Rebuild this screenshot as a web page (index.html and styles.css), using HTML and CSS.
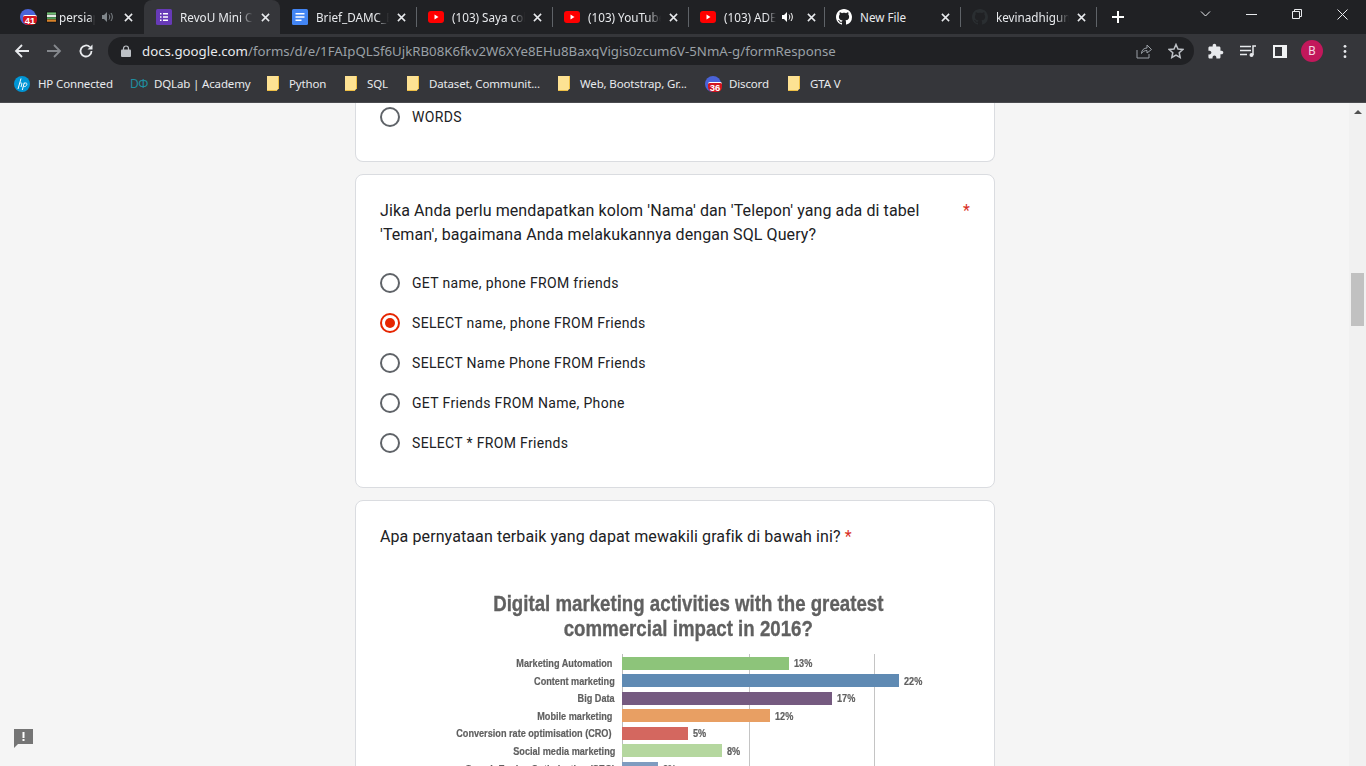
FILE: index.html
```html
<!DOCTYPE html>
<html lang="en">
<head>
    <meta charset="UTF-8">
    <meta name="viewport" content="width=device-width, initial-scale=1.0">
    <title>RevoU Mini Course</title>
    <link rel="stylesheet" href="styles.css">
</head>
<body>
    <div class="browser">
        <!-- tabs -->
        <div class="tabstrip">
            <div class="tab tab-first">
                <span class="badge-icon"><span class="badge-num">41</span></span>
                <svg class="fav-small" viewBox="0 0 12 12"><rect width="12" height="12" fill="#111"/><rect x="1" y="1" width="10" height="2.4" fill="#6fbf73"/><rect x="1" y="3.6" width="10" height="2.4" fill="#e8e8e8"/><rect x="1" y="6.2" width="10" height="2.4" fill="#4f9d5b"/><rect x="1" y="8.8" width="10" height="2.4" fill="#d9822b"/></svg>
                <span class="tab-title short">persiap</span>
                <svg class="speaker dim" viewBox="0 0 12 12"><path d="M1 4h2l3-3v10L3 8H1z" fill="currentColor"/><path d="M8 3.5c1 1.400 1 3.600 0 5M10 2c1.800 2.400 1.800 5.600 0 8" stroke="currentColor" fill="none"/></svg>
                <svg class="close" viewBox="0 0 10 10"><path d="M1 1l8 8M9 1L1 9"/></svg>
            </div>
            <div class="tab active">
                <svg class="fav" viewBox="0 0 16 16"><rect width="16" height="16" rx="1.500" fill="#673ab7"/><path d="M4 4h1.500v1.500H4zM7 4h5v1.500H7zM4 7.200h1.500v1.500H4zM7 7.200h5v1.500H7zM4 10.400h1.500v1.500H4zM7 10.400h5v1.500H7z" fill="#fff"/></svg>
                <span class="tab-title">RevoU Mini Course</span>
                <svg class="close" viewBox="0 0 10 10"><path d="M1 1l8 8M9 1L1 9"/></svg>
            </div>
            <div class="tab">
                <svg class="fav" viewBox="0 0 16 16"><rect width="16" height="16" rx="1.500" fill="#4285f4"/><path d="M3.500 4h9v1.600h-9zM3.500 7.200h9v1.600h-9zM3.500 10.400h6v1.600h-6z" fill="#fff"/></svg>
                <span class="tab-title">Brief_DAMC_Batch</span>
                <svg class="close" viewBox="0 0 10 10"><path d="M1 1l8 8M9 1L1 9"/></svg>
            </div>
            <div class="tab sep">
                <svg class="fav" viewBox="0 0 16 12"><rect width="16" height="12" rx="3" fill="#f00"/><path d="M6.500 3.500v5l4-2.500z" fill="#fff"/></svg>
                <span class="tab-title">(103) Saya coba</span>
                <svg class="close" viewBox="0 0 10 10"><path d="M1 1l8 8M9 1L1 9"/></svg>
            </div>
            <div class="tab sep">
                <svg class="fav" viewBox="0 0 16 12"><rect width="16" height="12" rx="3" fill="#f00"/><path d="M6.500 3.500v5l4-2.500z" fill="#fff"/></svg>
                <span class="tab-title">(103) YouTube</span>
                <svg class="close" viewBox="0 0 10 10"><path d="M1 1l8 8M9 1L1 9"/></svg>
            </div>
            <div class="tab sep">
                <svg class="fav" viewBox="0 0 16 12"><rect width="16" height="12" rx="3" fill="#f00"/><path d="M6.500 3.500v5l4-2.500z" fill="#fff"/></svg>
                <span class="tab-title short2">(103) ADELE</span>
                <svg class="speaker" viewBox="0 0 12 12"><path d="M1 4h2l3-3v10L3 8H1z" fill="currentColor"/><path d="M8 3.500c1 1.400 1 3.600 0 5M10 2c1.800 2.400 1.800 5.600 0 8" stroke="currentColor" fill="none"/></svg>
                <svg class="close" viewBox="0 0 10 10"><path d="M1 1l8 8M9 1L1 9"/></svg>
            </div>
            <div class="tab sep">
                <svg class="fav" viewBox="0 0 16 16"><path fill="#fff" d="M8 0C3.580 0 0 3.580 0 8c0 3.540 2.290 6.530 5.470 7.590.4.070.55-.17.55-.38 0-.19-.01-.82-.01-1.490-2.010.37-2.530-.49-2.690-.94-.09-.23-.48-.94-.82-1.130-.28-.15-.68-.52-.01-.53.630-.01 1.080.58 1.230.82.720 1.210 1.870.87 2.330.66.070-.52.280-.87.510-1.070-1.780-.2-3.640-.89-3.640-3.950 0-.87.310-1.590.82-2.150-.08-.2-.36-1.020.08-2.120 0 0 .67-.21 2.200.82.640-.18 1.320-.27 2-.27s1.360.09 2 .27c1.530-1.040 2.200-.82 2.200-.82.440 1.100.16 1.920.08 2.120.51.560.82 1.270.82 2.150 0 3.070-1.870 3.750-3.650 3.950.29.250.54.730.54 1.480 0 1.070-.01 1.930-.01 2.200 0 .21.150.46.550.38A8.010 8.010 0 0 0 16 8c0-4.420-3.580-8-8-8z"/></svg>
                <span class="tab-title plain">New File</span>
                <svg class="close" viewBox="0 0 10 10"><path d="M1 1l8 8M9 1L1 9"/></svg>
            </div>
            <div class="tab sep">
                <svg class="fav" viewBox="0 0 16 16"><path fill="#2a2e31" d="M8 0C3.580 0 0 3.580 0 8c0 3.540 2.290 6.530 5.470 7.590.4.070.55-.17.55-.38v-1.490c-2.010.37-2.530-.49-2.690-.94-.09-.23-.48-.94-.82-1.130-.28-.15-.68-.52-.01-.53.630-.01 1.080.58 1.230.82.720 1.210 1.870.87 2.330.66.070-.52.280-.87.510-1.070-1.780-.2-3.640-.89-3.640-3.950 0-.87.310-1.590.82-2.150-.08-.2-.36-1.020.08-2.120 0 0 .67-.21 2.200.82.640-.18 1.320-.27 2-.27s1.360.09 2 .27c1.530-1.040 2.200-.82 2.200-.82.440 1.100.16 1.920.08 2.120.51.560.82 1.270.82 2.150 0 3.070-1.870 3.750-3.650 3.950.29.250.54.730.54 1.480v2.200c0 .21.150.46.550.38A8.010 8.010 0 0 0 16 8c0-4.420-3.580-8-8-8z"/></svg>
                <span class="tab-title">kevinadhigunawan</span>
                <svg class="close" viewBox="0 0 10 10"><path d="M1 1l8 8M9 1L1 9"/></svg>
            </div>
            <div class="newtab-wrap sep">
                <svg class="newtab" viewBox="0 0 12 12"><path d="M6 0v12M0 6h12"/></svg>
            </div>
            <div class="window-btns">
                <svg class="win-chevron" viewBox="0 0 10 6"><path d="M.5.5L5 5 9.500.5"/></svg>
                <svg class="win-min" viewBox="0 0 11 1"><path d="M0 .5h11"/></svg>
                <svg class="win-max" viewBox="0 0 10 10"><path d="M.5 2.500h7v7h-7zM2.500 2.500v-2h7v7h-2"/></svg>
                <svg class="win-close" viewBox="0 0 11 11"><path d="M.5.5l10 10M10.500.5l-10 10"/></svg>
            </div>
        </div>

        <!-- address bar -->
        <div class="toolbar">
            <svg class="nav-icon" viewBox="0 0 16 16"><path d="M15 8H2M8 2L2 8l6 6" class="nav-stroke"/></svg>
            <svg class="nav-icon dim" viewBox="0 0 16 16"><path d="M1 8h13M8 2l6 6-6 6" class="nav-stroke"/></svg>
            <svg class="nav-icon" viewBox="0 0 16 16"><path d="M13.500 8a5.500 5.500 0 1 1-1.600-3.900" class="nav-stroke"/><path d="M14.500 1.500v5h-5z" fill="#e8eaed"/></svg>
            <div class="omnibox">
                <svg class="lock" viewBox="0 0 10 12"><path d="M2.500 5V3.500a2.500 2.500 0 0 1 5 0V5" fill="none" stroke="#bdc1c6" stroke-width="1.200"/><rect y="4.500" width="10" height="7.500" rx="1" fill="#bdc1c6"/></svg>
                <span class="url"><span class="url-host">docs.google.com</span>/forms/d/e/1FAIpQLSf6UjkRB08K6fkv2W6XYe8EHu8BaxqVigis0zcum6V-5NmA-g/formResponse</span>
                <svg class="omni-icon" viewBox="0 0 16 16"><path d="M1 7v8h12v-4M5.500 10.500c0-3.500 2.500-5.500 5.500-5.500V2l4.500 4.500L11 10V7.500c-2.500 0-4.500 1-5.500 3z" fill="none" stroke="#9aa0a6"/></svg>
                <svg class="omni-icon star" viewBox="0 0 16 16"><path d="M8 1.500l2 4.500 4.800.5-3.600 3.200 1 4.800L8 12.100l-4.200 2.400 1-4.800L1.200 6.500 6 6z" fill="none" stroke="#bdc1c6" stroke-width="1.500"/></svg>
            </div>
            <div class="tool-icons">
                <svg class="tool-icon puzzle" viewBox="0 0 24 24"><path fill="#e8eaed" d="M20.500 11H19V7c0-1.100-.9-2-2-2h-4V3.500C13 2.120 11.880 1 10.500 1S8 2.120 8 3.500V5H4c-1.100 0-1.990.9-1.990 2v3.800H3.500c1.490 0 2.700 1.210 2.700 2.700s-1.210 2.700-2.700 2.700H2V20c0 1.100.9 2 2 2h3.800v-1.500c0-1.490 1.210-2.700 2.700-2.700 1.490 0 2.700 1.210 2.700 2.700V22H17c1.100 0 2-.9 2-2v-4h1.500c1.380 0 2.500-1.120 2.500-2.500S21.880 11 20.500 11z"/></svg>
                <svg class="tool-icon queue" viewBox="0 0 16 12"><path d="M0 1.500h11M0 5.500h11M0 9.500h7" stroke="#e8eaed" stroke-width="1.400" fill="none"/><path d="M13 10V1h3" stroke="#e8eaed" stroke-width="1.500" fill="none"/><circle cx="11.500" cy="10" r="2" fill="#e8eaed"/></svg>
                <svg class="tool-icon panel" viewBox="0 0 14 13"><rect x="1" y="1" width="12" height="11" fill="none" stroke="#f1f3f4" stroke-width="2"/><rect x="9" y="1" width="4" height="11" fill="#f1f3f4"/></svg>
                <span class="avatar">B</span>
                <svg class="tool-icon menu" viewBox="0 0 4 16"><circle cx="2" cy="2.500" r="1.500" fill="#e8eaed"/><circle cx="2" cy="8" r="1.500" fill="#e8eaed"/><circle cx="2" cy="13.500" r="1.500" fill="#e8eaed"/></svg>
            </div>
        </div>

        <!-- bookmarks -->
        <div class="bookmarks">
            <div class="bm bm-hp">
                <svg class="bm-icon" viewBox="0 0 16 16"><circle cx="8" cy="8" r="8" fill="#0096d6"/><path d="M7 2.500L4 13M5.600 7.500c1.100-1 2.500-.8 2.200.5L7 11M10.300 6.500L8.300 14M10.300 7.500c1.400-1 2.900-.6 2.500 1-.4 1.700-1.900 2.500-3.200 1.800" stroke="#fff" fill="none" stroke-width="1"/></svg>
                <span>HP Connected</span>
            </div>
            <div class="bm bm-dq">
                <span class="dq-logo">DΦ</span>
                <span>DQLab | Academy</span>
            </div>
            <div class="bm bm-py"><span class="folder"></span><span>Python</span></div>
            <div class="bm bm-sql"><span class="folder"></span><span>SQL</span></div>
            <div class="bm bm-data"><span class="folder"></span><span>Dataset, Communit...</span></div>
            <div class="bm bm-web"><span class="folder"></span><span>Web, Bootstrap, Gr...</span></div>
            <div class="bm bm-disc">
                <span class="badge-icon small"><span class="badge-num">36</span></span>
                <span>Discord</span>
            </div>
            <div class="bm"><span class="folder"></span><span>GTA V</span></div>
        </div>

        <!-- page -->
        <div class="viewport">
            <main class="page">
                <section class="card card-top">
                    <div class="option"><span class="radio"></span><span>WORDS</span></div>
                </section>

                <section class="card card-sql">
                    <div class="question">
                        <p class="q-text">Jika Anda perlu mendapatkan kolom 'Nama' dan 'Telepon' yang ada di tabel 'Teman', bagaimana Anda melakukannya dengan SQL Query?</p>
                        <span class="req req-side">*</span>
                    </div>
                    <div class="options">
                        <div class="option"><span class="radio"></span><span>GET name, phone FROM friends</span></div>
                        <div class="option"><span class="radio checked"></span><span>SELECT name, phone FROM Friends</span></div>
                        <div class="option"><span class="radio"></span><span>SELECT Name Phone FROM Friends</span></div>
                        <div class="option"><span class="radio"></span><span>GET Friends FROM Name, Phone</span></div>
                        <div class="option"><span class="radio"></span><span>SELECT * FROM Friends</span></div>
                    </div>
                </section>

                <section class="card card-chart">
                    <p class="q-text">Apa pernyataan terbaik yang dapat mewakili grafik di bawah ini? <span class="req">*</span></p>
                    <div class="chart">
                        <h2 class="chart-title">Digital marketing activities with the greatest<br>commercial impact in 2016?</h2>
                        <div class="chart-body">
                            <div class="chart-row"><span class="chart-label inset">Marketing Automation</span><span class="chart-bar c-green" style="width:167px"></span><span class="chart-val">13%</span></div>
                            <div class="chart-row"><span class="chart-label">Content marketing</span><span class="chart-bar c-blue" style="width:277px"></span><span class="chart-val">22%</span></div>
                            <div class="chart-row"><span class="chart-label">Big Data</span><span class="chart-bar c-purple" style="width:210px"></span><span class="chart-val">17%</span></div>
                            <div class="chart-row"><span class="chart-label inset">Mobile marketing</span><span class="chart-bar c-orange" style="width:148px"></span><span class="chart-val">12%</span></div>
                            <div class="chart-row"><span class="chart-label inset">Conversion rate optimisation (CRO)</span><span class="chart-bar c-red" style="width:66px"></span><span class="chart-val">5%</span></div>
                            <div class="chart-row"><span class="chart-label">Social media marketing</span><span class="chart-bar c-lime" style="width:100px"></span><span class="chart-val">8%</span></div>
                            <div class="chart-row"><span class="chart-label">Search Engine Optimisation (SEO)</span><span class="chart-bar c-steel" style="width:36px"></span><span class="chart-val">3%</span></div>
                        </div>
                    </div>
                </section>
            </main>
            <div class="scrollbar">
                <svg class="scroll-arrow" viewBox="0 0 8 4"><path d="M4 0l4 4H0z"/></svg>
                <div class="scroll-thumb"></div>
            </div>
            <svg class="feedback" viewBox="0 0 20 20"><path d="M1 1h19v15H5l-4 4z" fill="#757575"/><rect x="9.500" y="4" width="2" height="6" fill="#fff"/><rect x="9.500" y="11" width="2" height="2" fill="#fff"/></svg>
        </div>
    </div>
</body>
</html>
```

FILE: styles.css
```css
*{
    padding: 0;
    margin: 0;
    box-sizing: border-box;
}
html, body{
    height: 100%;
    overflow: hidden;
}
body{
    font-family: "Roboto", sans-serif;
}
.browser{
    height: 100vh;
    display: flex;
    flex-direction: column;
}

/* tabs */
.tabstrip{
    height: 34px;
    background-color: #202124;
    display: flex;
    padding-left: 8px;
    color: #e8eaed;
    font-family: "Noto Sans", sans-serif;
    font-size: 11.7px;
}
.tab{
    width: 136px;
    height: 34px;
    display: flex;
    align-items: center;
    padding: 0 10px 0 12px;
    position: relative;
}
.tab.active{
    background-color: #35363a;
    border-radius: 8px 8px 0 0;
}
.tab.sep::before, .newtab-wrap.sep::before{
    content: "";
    position: absolute;
    left: 0;
    top: 7px;
    height: 20px;
    width: 1px;
    background-color: #5f6368;
}
.fav{
    width: 16px;
    height: 16px;
    flex: none;
    margin-right: 8px;
}
.fav-small{
    width: 11px;
    height: 12px;
    flex: none;
    margin: 0 2px 0 10px;
}
.tab-title{
    flex: 1;
    min-width: 0;
    white-space: nowrap;
    overflow: hidden;
    -webkit-mask-image: linear-gradient(to right, #000 82%, transparent 100%);
    mask-image: linear-gradient(to right, #000 82%, transparent 100%);
}
.tab-title.plain{
    -webkit-mask-image: none;
    mask-image: none;
}
.tab-title.short{
    flex: none;
    width: 36px;
}
.tab-title.short2{
    flex: none;
    width: 52px;
}
.speaker{
    width: 12px;
    height: 12px;
    color: #fff;
    flex: none;
    margin-left: 5px;
    margin-right: 14px;
}
.speaker.dim{
    color: #80868b;
    margin-left: 6px;
    margin-right: 0;
}
.close{
    width: 9px;
    height: 9px;
    flex: none;
    margin-left: auto;
    stroke: #e8eaed;
    stroke-width: 1.700;
    fill: none;
}
.tab .tab-title + .close{
    margin-left: 8px;
}
.tab-first{
    padding-left: 12px;
}
.tab-first .close{
    margin-left: 11px;
}
.badge-icon{
    width: 16px;
    height: 16px;
    border-radius: 50%;
    background-color: #4a63d8;
    position: relative;
    flex: none;
}
.badge-num{
    position: absolute;
    left: 3px;
    bottom: 0;
    width: 14px;
    height: 10px;
    background-color: #d3151f;
    border-top: 1px solid #fff;
    border-radius: 2px 2px 5px 5px;
    color: #fff;
    font-family: "Liberation Sans", sans-serif;
    font-size: 9.5px;
    font-weight: 700;
    line-height: 9px;
    text-align: center;
}
.newtab-wrap{
    width: 44px;
    height: 34px;
    position: relative;
    display: flex;
    align-items: center;
    justify-content: center;
}
.newtab{
    width: 12px;
    height: 12px;
    stroke: #fff;
    stroke-width: 2;
    fill: none;
}
.window-btns{
    flex: 1;
    display: flex;
    align-items: flex-start;
    justify-content: flex-end;
    padding-top: 9px;
    padding-right: 18px;
    gap: 35px;
    stroke: #e8eaed;
    fill: none;
}
.window-btns svg{
    flex: none;
}
.win-chevron{
    width: 11px;
    height: 6px;
    margin-top: 2px;
}
.win-min{
    width: 11px;
    height: 1px;
    margin-top: 5px;
}
.win-max{
    width: 10px;
    height: 10px;
}
.win-close{
    width: 11px;
    height: 11px;
}

/* toolbar */
.toolbar{
    height: 34px;
    background-color: #35363a;
    display: flex;
    align-items: center;
    padding-left: 14px;
    gap: 16px;
}
.nav-icon{
    width: 16px;
    height: 16px;
    flex: none;
}
.nav-stroke{
    stroke: #e8eaed;
    stroke-width: 1.800;
    fill: none;
}
.nav-icon.dim .nav-stroke{
    stroke: #85888d;
}
.omnibox{
    width: 1086px;
    height: 28px;
    background-color: #202124;
    border-radius: 14px;
    margin-left: -2px;
    flex: none;
    display: flex;
    align-items: center;
    padding: 0 10px 0 13px;
    color: #9aa0a6;
    font-family: "Noto Sans", sans-serif;
    font-size: 13.25px;
}
.lock{
    width: 10px;
    height: 12px;
    flex: none;
    margin-right: 11px;
}
.url{
    flex: 1;
    white-space: nowrap;
    overflow: hidden;
}
.url-host{
    color: #e8eaed;
}
.omni-icon{
    width: 16px;
    height: 16px;
    flex: none;
    margin-left: 16px;
}
.tool-icons{
    display: flex;
    align-items: center;
    gap: 17px;
    margin-left: -2px;
}
.tool-icon{
    width: 15px;
    height: 15px;
    flex: none;
}
.tool-icon.puzzle{
    width: 17px;
    height: 17px;
    margin: 0 -1px;
}
.tool-icon.queue{
    width: 16px;
    height: 12px;
}
.tool-icon.panel{
    width: 14px;
    height: 13px;
}
.avatar{
    width: 22px;
    height: 22px;
    border-radius: 50%;
    background-color: #c2185b;
    color: #f3d6e2;
    font-size: 12px;
    line-height: 22px;
    text-align: center;
    flex: none;
    margin: 0 -3px;
}
.tool-icon.menu{
    width: 4px;
    margin-left: 6px;
}

/* bookmarks */
.bookmarks{
    height: 35px;
    background-color: #35363a;
    border-bottom: 1px solid #4a4b4f;
    display: flex;
    align-items: center;
    padding: 0 0 3px 14px;
    color: #e8eaed;
    font-family: "Noto Sans", sans-serif;
    font-size: 11.5px;
    letter-spacing: -.15px;
}
.bm{
    display: flex;
    align-items: center;
    gap: 8px;
    white-space: nowrap;
    flex: none;
}
.bm-hp{ width: 116px; }
.bm-dq{ width: 137px; }
.bm-py{ width: 78px; }
.bm-sql{ width: 62px; }
.bm-data{ width: 151px; }
.bm-web{ width: 147px; }
.bm-disc{ width: 83px; }
.bm-icon{
    width: 16px;
    height: 16px;
    flex: none;
}
.dq-logo{
    width: 16px;
    color: #1f8fa0;
    font-size: 12px;
    flex: none;
    letter-spacing: -.5px;
}
.folder{
    width: 12px;
    height: 15px;
    background-color: #fde293;
    border: 1px solid #eebf45;
    border-width: 0 1px 1px 0;
    clip-path: polygon(0 0, 100% 0, 100% 82%, 78% 100%, 0 100%);
    margin-right: 2px;
    flex: none;
}

/* page */
.viewport{
    flex: 1;
    min-height: 0;
    display: flex;
    position: relative;
    background-color: #f5f5f5;
}
.page{
    flex: 1;
    overflow: hidden;
    display: flex;
    flex-direction: column;
    align-items: center;
    gap: 12px;
    padding-left: 1px;
    color: #202124;
}
.card{
    width: 640px;
    flex: none;
    background-color: #fff;
    border: 1px solid #dadce0;
    border-radius: 8px;
    padding: 24px;
}
.card-top{
    border-top: none;
    border-radius: 0 0 8px 8px;
    padding-top: 0;
    height: 59px;
}
.card-top .option{
    margin-top: -6px;
}
.card-sql{
    height: 314px;
    padding-top: 24px;
}
.card-chart{
    height: 300px;
    padding-top: 24px;
}
.question{
    display: flex;
    justify-content: space-between;
}
.q-text{
    font-size: 16px;
    line-height: 24px;
    letter-spacing: .1px;
}
.question .q-text{
    width: 560px;
}
.req{
    color: #d93025;
    font-size: 16px;
    line-height: 24px;
}
.options{
    margin-top: 16px;
    display: flex;
    flex-direction: column;
}
.option{
    height: 40px;
    display: flex;
    align-items: center;
    gap: 12px;
    font-size: 14px;
    letter-spacing: .33px;
}
.radio{
    width: 20px;
    height: 20px;
    border-radius: 50%;
    border: 2px solid #5f6368;
    flex: none;
    position: relative;
}
.radio.checked{
    border-color: #e62500;
}
.radio.checked::after{
    content: "";
    position: absolute;
    left: 3px;
    top: 3px;
    width: 10px;
    height: 10px;
    border-radius: 50%;
    background-color: #e62500;
}

/* chart picture */
.chart{
    margin-top: 42px;
    filter: blur(.5px);
    font-family: "Liberation Sans", sans-serif;
    color: #5f5f5f;
}
.chart-title{
    font-size: 22.5px;
    line-height: 25px;
    font-weight: 700;
    text-align: center;
    white-space: nowrap;
    transform: scaleX(.83);
    color: #606060;
    -webkit-text-stroke: .35px #606060;
    padding-left: 32px;
}
.chart-body{
    margin-top: 13px;
    margin-left: 242px;
    display: flex;
    flex-direction: column;
    gap: 3.600px;
    position: relative;
    padding-top: 2px;
    background-image: linear-gradient(#c4c4c4, #c4c4c4), linear-gradient(#c4c4c4, #c4c4c4), linear-gradient(#bbb, #bbb);
    background-size: 1px 100%, 1px 100%, 1px 100%;
    background-position: 127px 0, 252px 0, 0 0;
    background-repeat: no-repeat;
}
.chart-row{
    height: 14px;
    display: flex;
    align-items: center;
    position: relative;
    gap: 5px;
    font-size: 10.5px;
    font-weight: 700;
    -webkit-text-stroke: .2px #5f5f5f;
}
.chart-label{
    position: absolute;
    right: 100%;
    margin-right: 7px;
    white-space: nowrap;
    transform: scaleX(.87);
    transform-origin: right center;
}
.chart-label.inset{
    margin-right: 10px;
}
.chart-val{
    transform: scaleX(.87);
    transform-origin: left center;
}
.chart-bar{
    height: 13px;
}
.c-green{ background-color: #8dc47a; }
.c-blue{ background-color: #5f8ab3; }
.c-purple{ background-color: #755a80; }
.c-orange{ background-color: #e89f63; }
.c-red{ background-color: #d4675f; }
.c-lime{ background-color: #b5d79f; }
.c-steel{ background-color: #7f9cc0; }

/* right side */
.scrollbar{
    width: 17px;
    flex: none;
    background-color: #f1f1f1;
    display: flex;
    flex-direction: column;
    align-items: center;
    padding-top: 7px;
}
.scroll-arrow{
    width: 8px;
    height: 4px;
    fill: #505050;
    flex: none;
}
.scroll-thumb{
    width: 13px;
    height: 53px;
    background-color: #c1c1c1;
    margin-top: 159px;
    flex: none;
}
.feedback{
    position: absolute;
    left: 13px;
    bottom: 18px;
    width: 20px;
    height: 20px;
}
```
